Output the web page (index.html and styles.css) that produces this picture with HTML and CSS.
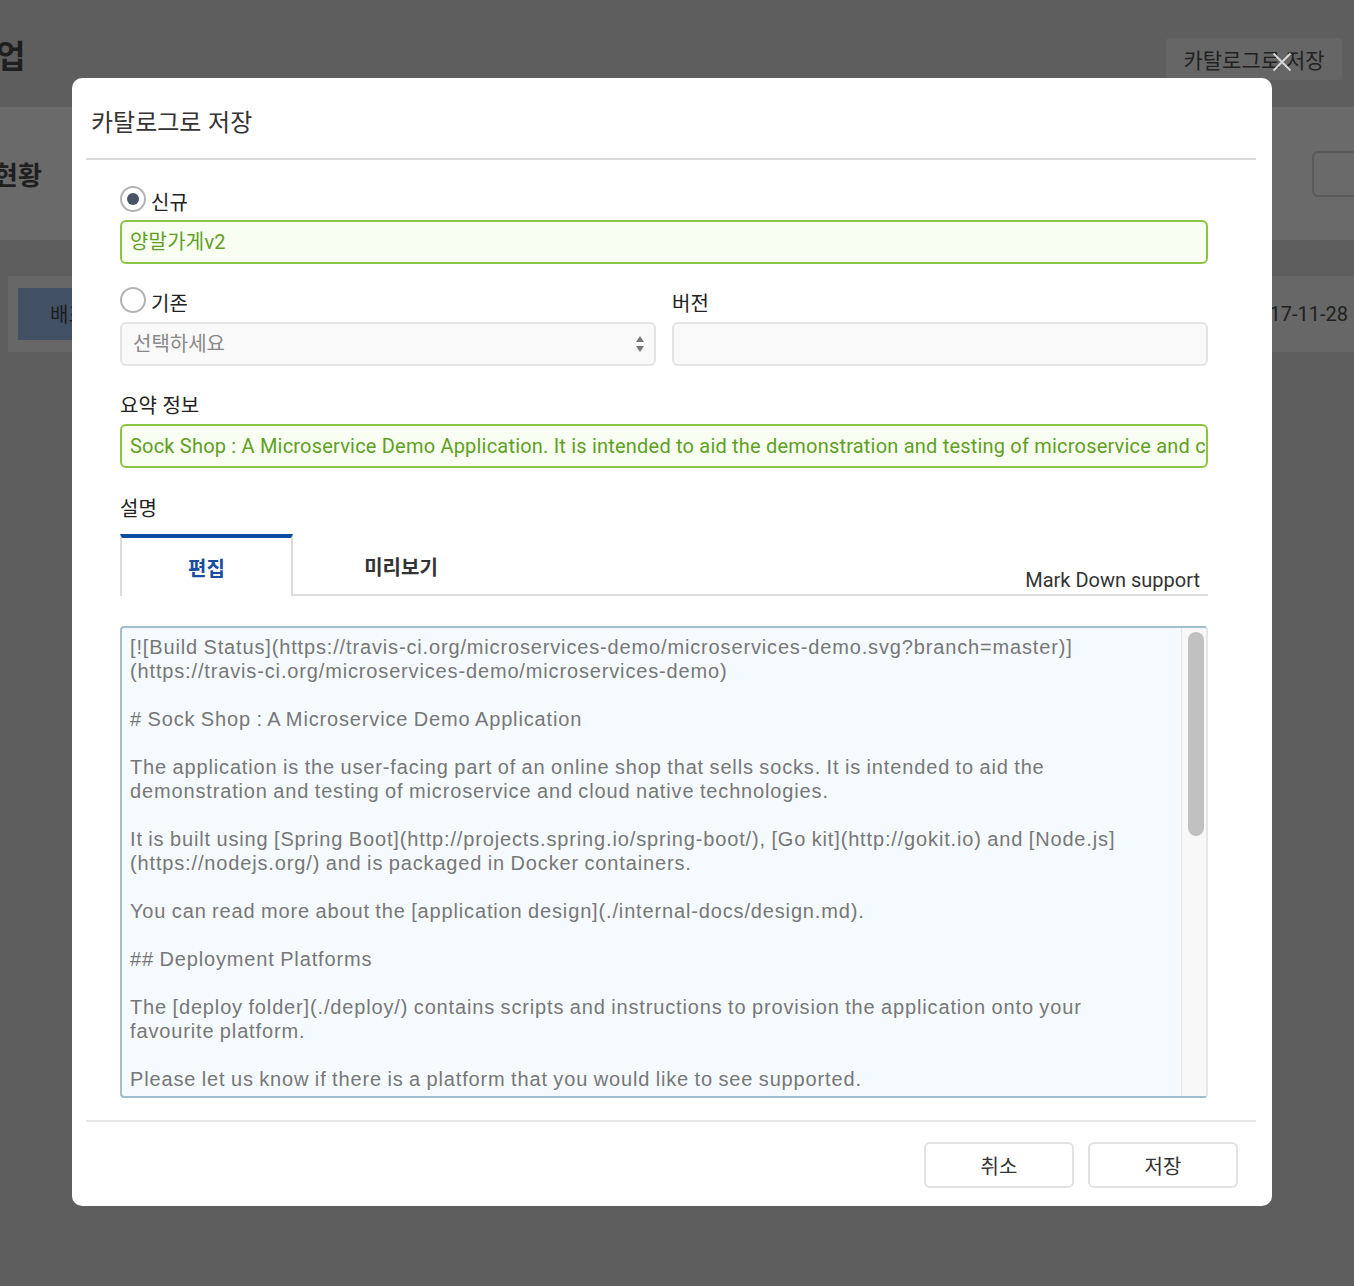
FILE: index.html
```html
<!DOCTYPE html>
<html lang="ko">
<head>
<meta charset="utf-8">
<title>카탈로그로 저장</title>
<link rel="stylesheet" href="styles.css">
</head>
<body>
<div class="page">
  <header class="page-top">
    <h1 class="page-title">업</h1>
    <div class="page-btn">카탈로그로 저장</div>
  </header>
  <section class="page-band">
    <h2 class="band-title">현황</h2>
    <div class="band-box"></div>
  </section>
  <section class="page-list">
    <div class="list-card">
      <span class="list-tag">배포</span>
      <span class="list-date">2017-11-28</span>
    </div>
  </section>
</div>

<div class="modal-close" aria-label="닫기">
  <svg width="20" height="20" viewBox="0 0 20 20"><path d="M1.5 1.5 L18.5 18.5 M18.5 1.5 L1.5 18.5" stroke="#d9d9d9" stroke-width="1.8" fill="none"/></svg>
</div>

<div class="modal">
  <div class="modal-header">
    <h3 class="modal-title">카탈로그로 저장</h3>
  </div>
  <div class="modal-body">
    <div class="radio-row">
      <span class="radio checked"></span><span class="radio-label">신규</span>
    </div>
    <div class="input valid gap8">양말가게v2</div>

    <div class="two-col">
      <div class="col">
        <div class="radio-row">
          <span class="radio"></span><span class="radio-label">기존</span>
        </div>
        <div class="select">
          <span class="select-text">선택하세요</span>
          <svg width="10" height="18" viewBox="0 0 10 18"><path d="M5 1 L9 7 L1 7 Z M1 11 L9 11 L5 17 Z" fill="#777"/></svg>
        </div>
      </div>
      <div class="col">
        <div class="field-label row-label">버전</div>
        <div class="input plain"></div>
      </div>
    </div>

    <div class="field-label mt26">요약 정보</div>
    <div class="input valid gap6 summary">Sock Shop : A Microservice Demo Application. It is intended to aid the demonstration and testing of microservice and cloud native technologies.</div>

    <div class="field-label mt27">설명</div>
    <div class="tabs">
      <div class="tab active">편집</div>
      <div class="tab">미리보기</div>
      <div class="tab-note">Mark Down support</div>
    </div>

    <div class="editor">
      <div class="editor-text">[![Build Status](https://travis-ci.org/microservices-demo/microservices-demo.svg?branch=master)]
(https://travis-ci.org/microservices-demo/microservices-demo)

# Sock Shop : A Microservice Demo Application

The application is the user-facing part of an online shop that sells socks. It is intended to aid the
demonstration and testing of microservice and cloud native technologies.

It is built using [Spring Boot](http://projects.spring.io/spring-boot/), [Go kit](http://gokit.io) and [Node.js]
(https://nodejs.org/) and is packaged in Docker containers.

You can read more about the [application design](./internal-docs/design.md).

## Deployment Platforms

The [deploy folder](./deploy/) contains scripts and instructions to provision the application onto your
favourite platform.

Please let us know if there is a platform that you would like to see supported.</div>
      <div class="editor-scroll"><div class="editor-thumb"></div></div>
    </div>
  </div>
  <div class="modal-footer">
    <button class="btn">취소</button>
    <button class="btn">저장</button>
  </div>
</div>
</body>
</html>
```

FILE: styles.css
```css
* { box-sizing: border-box; }

html, body {
  margin: 0;
  padding: 0;
  height: 100%;
}

body {
  background: #5e5e5e;
  overflow: hidden;
  font-family: Roboto, "Noto Sans CJK KR", sans-serif;
  color: #222;
}

/* ---------- dimmed page behind the modal ---------- */
.page-top {
  height: 107px;
  display: flex;
  justify-content: space-between;
  align-items: flex-start;
  background: #5e5e5e;
  padding-right: 12px;
}

.page-title {
  margin: 32px 0 0 -4px;
  font-size: 32px;
  line-height: 44px;
  font-weight: 700;
  color: #1f1f1f;
  font-family: "Noto Sans CJK KR", sans-serif;
}

.page-btn {
  margin-top: 38px;
  height: 42px;
  width: 176px;
  border-radius: 4px;
  background: #666;
  color: #222;
  font-size: 21px;
  line-height: 42px;
  text-align: center;
  font-family: "Noto Sans CJK KR", sans-serif;
}

.page-band {
  height: 133px;
  background: #6a6a6a;
  display: flex;
  justify-content: space-between;
  align-items: center;
}

.band-title {
  margin: 0 0 0 -6px;
  font-size: 26px;
  font-weight: 700;
  color: #1f1f1f;
  line-height: 40px;
  font-family: "Noto Sans CJK KR", sans-serif;
}

.band-box {
  width: 60px;
  height: 46px;
  margin-right: -18px;
  border: 2px solid #5a5a5a;
  border-radius: 6px;
  background: #6a6a6a;
}

.page-list {
  padding: 36px 0 0 8px;
}

.list-card {
  height: 76px;
  background: #676767;
  display: flex;
  align-items: center;
  justify-content: space-between;
  padding: 0 6px 0 10px;
}

.list-tag {
  width: 120px;
  height: 52px;
  background: #425064;
  padding-left: 32px;
  font-size: 20px;
  line-height: 52px;
  color: #1c1c1c;
  font-family: "Noto Sans CJK KR", sans-serif;
}

.list-date {
  font-size: 20px;
  color: #1f1f1f;
}

/* ---------- close button ---------- */
.modal-close {
  position: fixed;
  left: 1272px;
  top: 52px;
  width: 20px;
  height: 20px;
}

.modal-close svg { display: block; }

/* ---------- modal ---------- */
.modal {
  position: fixed;
  left: 72px;
  top: 78px;
  width: 1200px;
  height: 1128px;
  background: #fff;
  border-radius: 10px;
  display: flex;
  flex-direction: column;
}

.modal-header {
  margin: 0 16px 0 14px;
  height: 82px;
  padding-top: 6px;
  border-bottom: 2px solid #d9d9d9;
  display: flex;
  align-items: center;
}

.modal-title {
  margin: 0 0 0 5px;
  font-size: 24px;
  font-weight: 400;
  color: #333;
  line-height: 32px;
  font-family: "Noto Sans CJK KR", sans-serif;
}

.modal-body {
  padding: 26px 64px 0 48px;
  display: flex;
  flex-direction: column;
}

.radio-row {
  height: 26px;
  display: flex;
  align-items: center;
  gap: 5px;
}

.radio {
  width: 26px;
  height: 26px;
  border-radius: 50%;
  border: 2px solid #b3b3b3;
  background: #fff;
  position: relative;
  flex: none;
}

.radio.checked::after {
  content: "";
  position: absolute;
  left: 5px;
  top: 5px;
  width: 12px;
  height: 12px;
  border-radius: 50%;
  background: #475366;
}

.radio-label,
.field-label {
  font-size: 20px;
  color: #222;
  font-family: "Noto Sans CJK KR", sans-serif;
  line-height: 26px;
}

.radio-label { padding-top: 5px; }
.row-label { padding-top: 3px; }

.field-label { height: 26px; }

.input {
  height: 44px;
  border-radius: 6px;
  border: 2px solid #e4e4e4;
  background: #f9f9f9;
  padding: 0 8px;
  font-size: 20px;
  line-height: 40px;
  white-space: nowrap;
  overflow: hidden;
  letter-spacing: 0.2px;
}

.input.valid {
  border-color: #8dc542;
  background: #f8fff2;
  color: #5f9f22;
}

.gap8 { margin-top: 8px; }
.gap6 { margin-top: 6px; }
.mt26 { margin-top: 26px; }
.mt27 { margin-top: 27px; }

.two-col {
  margin-top: 23px;
  display: grid;
  grid-template-columns: 1fr 1fr;
  gap: 16px;
}

.col {
  display: flex;
  flex-direction: column;
  gap: 9px;
}

.select {
  height: 44px;
  border-radius: 6px;
  border: 2px solid #e4e4e4;
  background: #f9f9f9;
  padding: 0 9px 0 11px;
  display: flex;
  align-items: center;
  justify-content: space-between;
  font-size: 20px;
  color: #888;
  font-family: "Noto Sans CJK KR", sans-serif;
}

.select-text { padding-bottom: 4px; }

.select svg { display: block; }

.tabs {
  margin-top: 13px;
  height: 62px;
  display: flex;
  border-bottom: 2px solid #dcdcdc;
}

.tab {
  width: 173px;
  height: 62px;
  display: flex;
  align-items: center;
  justify-content: center;
  font-size: 20px;
  font-weight: 700;
  color: #333;
  font-family: "Noto Sans CJK KR", sans-serif;
  padding-top: 2px;
}

.tab + .tab { width: 216px; }

.tab.active {
  border-top: 4px solid #0c4ca3;
  border-left: 2px solid #dcdcdc;
  border-right: 2px solid #dcdcdc;
  background: #fff;
  color: #1b4d9f;
  padding-top: 0;
}

.tab-note {
  margin-left: auto;
  align-self: flex-end;
  padding: 0 8px 2px 0;
  font-size: 20px;
  line-height: 24px;
  color: #333;
}

.editor {
  margin-top: 30px;
  height: 472px;
  border: 2px solid #a2bfce;
  border-right-color: #e6e6e6;
  border-radius: 4px;
  background: #f5faff;
  display: flex;
  overflow: hidden;
}

.editor-text {
  flex: 1;
  min-width: 0;
  padding: 7px 0 0 8px;
  overflow: hidden;
  white-space: pre;
  font-family: "Liberation Sans", "Noto Sans CJK KR", sans-serif;
  font-size: 20px;
  line-height: 24px;
  letter-spacing: 0.85px;
  word-spacing: -0.9px;
  color: #777;
}

.editor-scroll {
  flex: none;
  width: 25px;
  background: #f8f8f8;
  border-left: 1px solid #e4e4e4;
  padding: 4px 2px 0 6px;
}

.editor-thumb {
  height: 204px;
  border-radius: 8px;
  background: #c1c1c1;
}

.modal-footer {
  margin: 22px 16px 0 14px;
  border-top: 2px solid #e6e6e6;
  padding: 20px 18px 0 0;
  display: flex;
  justify-content: flex-end;
  gap: 14px;
}

.btn {
  width: 150px;
  height: 46px;
  padding: 0;
  border: 2px solid #e2e2e2;
  border-radius: 6px;
  background: #fff;
  font-family: "Noto Sans CJK KR", sans-serif;
  font-size: 20px;
  color: #333;
  cursor: pointer;
}
```
